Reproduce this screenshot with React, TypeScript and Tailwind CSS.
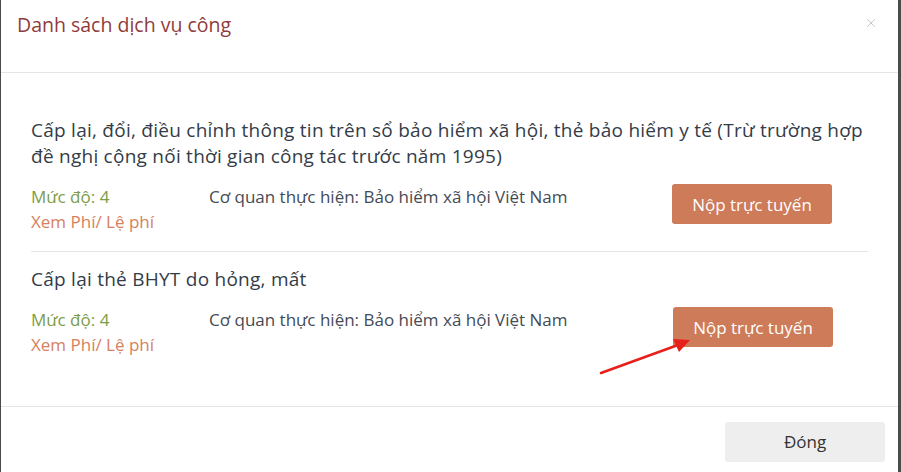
import React from "react";
import { X } from "lucide-react";

const services = [
  {
    title:
      "Cấp lại, đổi, điều chỉnh thông tin trên sổ bảo hiểm xã hội, thẻ bảo hiểm y tế (Trừ trường hợp đề nghị cộng nối thời gian công tác trước năm 1995)",
    level: 4,
    agency: "Bảo hiểm xã hội Việt Nam",
  },
  {
    title: "Cấp lại thẻ BHYT do hỏng, mất",
    level: 4,
    agency: "Bảo hiểm xã hội Việt Nam",
  },
];

export default function App() {
  return (
    <div className="flex h-[472px] w-[901px] bg-[#4b4b4b] font-['Open_Sans','Noto_Sans',sans-serif]">
      <div className="relative ml-px flex w-[897px] flex-col bg-white">
        {/* Header */}
        <header className="flex h-[73px] items-start justify-between border-b border-[#e5e5e5] pl-4 pr-5 pt-[12px]">
          <h1 className="text-[19.5px] leading-[26px] text-[#8f3c3c]">Danh sách dịch vụ công</h1>
          <button className="mt-[4px] text-[#c4c4c4]">
            <X className="h-[14px] w-[14px]" strokeWidth={1.6} />
          </button>
        </header>

        {/* Body */}
        <div className="flex-1 px-[30px] pt-[44px]">
          {services.map((s, i) => (
            <div
              key={i}
              className={i === 0 ? "border-b border-[#e5e5e5] pb-[17px] pr-[1px]" : "pt-[14px]"}
            >
              <h3 className="mr-[-10px] text-[19px] leading-[26px] tracking-[0.25px] text-[#343c48]">{s.title}</h3>
              <div className="mt-[15px] flex items-start text-[17px] leading-[25px]">
                <div className="w-[178px]">
                  <div className="text-[#7c9c48]">Mức độ: {s.level}</div>
                  <a className="text-[#d6815e]">Xem Phí/ Lệ phí</a>
                </div>
                <div className="flex-1 text-[#444b55]">Cơ quan thực hiện: {s.agency}</div>
                <button className="mr-[35px] h-[40px] w-[160px] rounded-[3px] bg-[#cd7b58] text-[17px] font-medium text-white">
                  Nộp trực tuyến
                </button>
              </div>
            </div>
          ))}
        </div>

        {/* Footer */}
        <footer className="flex h-[66px] items-start justify-end border-t border-[#e5e5e5] pr-[13px] pt-[15px]">
          <button className="h-[40px] w-[160px] rounded-[3px] bg-[#eeeeee] text-[17px] text-[#333]">
            Đóng
          </button>
        </footer>

        {/* annotation arrow */}
        <svg className="absolute left-[595px] top-[332px]" width="100" height="46" viewBox="0 0 100 46">
          <line x1="5" y1="41" x2="82" y2="13" stroke="#e8201c" strokeWidth="2.5" strokeLinecap="round" />
          <polygon points="94,8 77,7 83,20" fill="#e8201c" />
        </svg>
      </div>
    </div>
  );
}
